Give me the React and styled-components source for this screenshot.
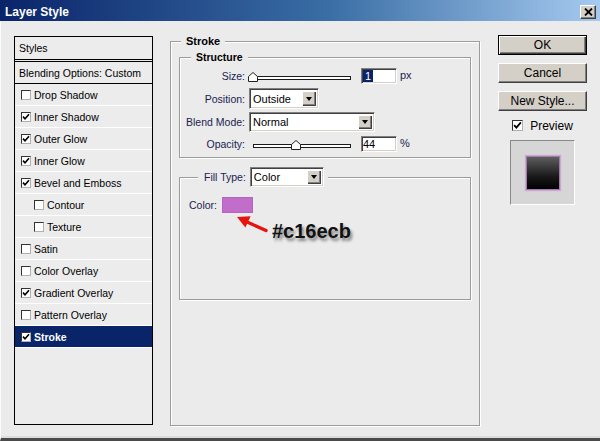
import React from "react";
import styled, { createGlobalStyle } from "styled-components";

const GlobalStyle = createGlobalStyle`
  html, body {
    margin: 0;
    padding: 0;
    background: #ebebeb;
  }
  body {
    font-family: "Liberation Sans", Arial, sans-serif;
  }
`;

const styleItems = [
  { label: "Drop Shadow", checked: false },
  { label: "Inner Shadow", checked: true },
  { label: "Outer Glow", checked: true },
  { label: "Inner Glow", checked: true },
  { label: "Bevel and Emboss", checked: true },
  { label: "Contour", checked: false, sub: true },
  { label: "Texture", checked: false, sub: true },
  { label: "Satin", checked: false },
  { label: "Color Overlay", checked: false },
  { label: "Gradient Overlay", checked: true },
  { label: "Pattern Overlay", checked: false },
  { label: "Stroke", checked: true, active: true },
];

const CheckBox = ({ checked, size = 10 }) => (
  <Box $size={size}>
    {checked ? (
      <svg width={size - 2} height={size - 2} viewBox="0 0 8 8">
        <path d="M1 3.6 L3 5.8 L7 1.2" fill="none" stroke="#000" strokeWidth="1.6" />
      </svg>
    ) : null}
  </Box>
);

const Slider = ({ value }) => (
  <SliderWrap>
    <Track />
    <Thumb style={{ left: `${(value / 100) * 98 - 5}px` }}>
      <svg width="10" height="10" viewBox="0 0 10 10">
        <path d="M0.5 4.5 L5 0.5 L9.5 4.5 L9.5 9.5 L0.5 9.5 Z" fill="#fff" stroke="#222" />
      </svg>
    </Thumb>
  </SliderWrap>
);

const Select = ({ value, width, height = 20 }) => (
  <SelectBox $width={width} $height={height}>
    <span>{value}</span>
    <DropBtn />
  </SelectBox>
);

const App = () => {
  return (
    <>
      <GlobalStyle />
      <Window>
        <TitleBar>
          <Title>Layer Style</Title>
          <CloseBtn>
            <svg width="9" height="8" viewBox="0 0 9 8">
              <path d="M1 0.5 L8 7.5 M8 0.5 L1 7.5" stroke="#000" strokeWidth="1.8" />
            </svg>
          </CloseBtn>
        </TitleBar>
        <Body>
          <StyleList>
            <ListHeader>Styles</ListHeader>
            <BlendRow>Blending Options: Custom</BlendRow>
            {styleItems.map((item) => (
              <StyleRow key={item.label} $sub={item.sub} $active={item.active}>
                <CheckBox checked={item.checked} />
                {item.label}
              </StyleRow>
            ))}
          </StyleList>

          <StrokeSet>
            <MainLegend>Stroke</MainLegend>
            <StructureSet>
              <SubLegend>Structure</SubLegend>
              <FieldRow $h={17}>
                <Label>Size:</Label>
                <Controls>
                  <Slider value={0} />
                  <NumInput>
                    <Selected>1</Selected>
                  </NumInput>
                  <Unit>px</Unit>
                </Controls>
              </FieldRow>
              <FieldRow $h={21} $top={1}>
                <Label>Position:</Label>
                <Select value="Outside" width={70} height={21} />
              </FieldRow>
              <FieldRow $h={20}>
                <Label>Blend Mode:</Label>
                <Select value="Normal" width={126} />
              </FieldRow>
              <FieldRow $h={17}>
                <Label>Opacity:</Label>
                <Controls>
                  <Slider value={44} />
                  <NumInput>44</NumInput>
                  <Unit>%</Unit>
                </Controls>
              </FieldRow>
            </StructureSet>

            <FillSet>
              <FillLegend>
                <LegendLabel>Fill Type:</LegendLabel>
                <Select value="Color" width={74} />
              </FillLegend>
              <FillBody>
                <ColorRow>
                  <Label as="span">Color:</Label>
                  <Swatch />
                </ColorRow>
                <Annotation>
                  <svg width="34" height="18" viewBox="0 0 34 18">
                    <path d="M31 15.5 L11 6.5" stroke="#e5140f" strokeWidth="3.4" strokeLinecap="round" />
                    <path d="M2 2 L15.6 1.2 L10.4 12.6 Z" fill="#e5140f" />
                  </svg>
                  <HexText>#c16ecb</HexText>
                </Annotation>
              </FillBody>
            </FillSet>
          </StrokeSet>

          <SideColumn>
            <Button $primary>OK</Button>
            <Button>Cancel</Button>
            <Button>New Style...</Button>
            <PreviewToggle>
              <CheckBox checked size={11} />
              Preview
            </PreviewToggle>
            <PreviewBox>
              <PreviewSquare />
            </PreviewBox>
          </SideColumn>
        </Body>
      </Window>
    </>
  );
};

const Window = styled.div`
  width: 600px;
  height: 441px;
  display: flex;
  flex-direction: column;
  background: #ebebeb;
  overflow: hidden;
`;

const TitleBar = styled.div`
  height: 21px;
  box-sizing: border-box;
  padding: 3px 4px 0 5px;
  display: flex;
  align-items: center;
  justify-content: space-between;
  background: linear-gradient(to right, #0a246a 0%, #3a6ea5 55%, #a6caf0 100%);
`;

const Title = styled.div`
  color: #fff;
  font-weight: bold;
  font-size: 12px;
`;

const CloseBtn = styled.div`
  width: 16px;
  height: 14px;
  box-sizing: border-box;
  display: flex;
  align-items: center;
  justify-content: center;
  background: #d4d0c8;
  border: 1px solid;
  border-color: #fff #404040 #404040 #fff;
  box-shadow: inset -1px -1px #808080;
`;

const Body = styled.div`
  flex: 1;
  display: flex;
  align-items: flex-start;
  padding: 14px 0 0 13px;
  border-left: 1px solid #fbfbfb;
  border-bottom: 3px solid #4a4a4a;
  box-shadow: inset 0 -2px #dcdcdc;
`;

const StyleList = styled.div`
  margin-top: 1px;
  width: 139px;
  height: 389px;
  box-sizing: border-box;
  border: 1px solid #000;
  background: #ececec;
  font-size: 10.5px;
  color: #000;
`;

const ListHeader = styled.div`
  height: 22px;
  display: flex;
  align-items: center;
  padding-left: 4px;
  border-bottom: 3px double #000;
`;

const BlendRow = styled.div`
  height: 21px;
  display: flex;
  align-items: center;
  padding-left: 4px;
  border-bottom: 1px solid #000;
`;

const StyleRow = styled.div`
  height: 21px;
  display: flex;
  align-items: center;
  gap: 3px;
  padding-left: ${(p) => (p.$sub ? "19px" : "6px")};
  border-bottom: 1px solid #fff;
  background: ${(p) => (p.$active ? "#0a246a" : "transparent")};
  color: ${(p) => (p.$active ? "#fff" : "#000")};
  font-weight: ${(p) => (p.$active ? "bold" : "normal")};
`;

const Box = styled.span`
  width: ${(p) => p.$size}px;
  height: ${(p) => p.$size}px;
  box-sizing: border-box;
  flex-shrink: 0;
  display: flex;
  align-items: center;
  justify-content: center;
  background: #fff;
  border: 1px solid;
  border-color: #333 #b0b0b0 #b0b0b0 #333;
`;

const StrokeSet = styled.fieldset`
  margin: 0 0 0 17px;
  padding: 4px 8px 0 8px;
  width: 310px;
  height: 391px;
  box-sizing: border-box;
  min-width: 0;
  border: 1px solid #9c9c9c;
  box-shadow: inset 1px 1px #fff, 1px 1px #fff;
`;

const MainLegend = styled.legend`
  margin-left: 2px;
  padding: 0 5px;
  font-size: 11px;
  line-height: 12px;
  font-weight: bold;
  color: #000;
  background: #ebebeb;
`;

const StructureSet = styled.fieldset`
  margin: 0;
  padding: 4px 0 5px 0;
  min-width: 0;
  display: flex;
  flex-direction: column;
  gap: 3px;
  border: 1px solid #9c9c9c;
  box-shadow: inset 1px 1px #fff, 1px 1px #fff;
`;

const SubLegend = styled.legend`
  margin-left: 11px;
  padding: 0 5px;
  font-size: 10.5px;
  line-height: 12px;
  font-weight: bold;
  color: #000;
  background: #ebebeb;
`;

const FieldRow = styled.div`
  display: grid;
  grid-template-columns: 65px auto;
  column-gap: 4px;
  align-items: center;
  height: ${(p) => p.$h}px;
  margin-top: ${(p) => p.$top || 0}px;
`;

const Label = styled.label`
  text-align: right;
  font-size: 10.5px;
  color: #1a2250;
  white-space: nowrap;
`;

const Controls = styled.div`
  display: flex;
  align-items: center;
`;

const SliderWrap = styled.div`
  position: relative;
  width: 98px;
  height: 17px;
  margin-left: 4px;
`;

const Track = styled.div`
  margin-top: 9px;
  height: 4px;
  box-sizing: border-box;
  border: 1px solid #1a1a1a;
  background: #fff;
`;

const Thumb = styled.div`
  position: absolute;
  top: 5px;
  width: 10px;
  height: 10px;
  line-height: 0;
`;

const NumInput = styled.div`
  margin-left: 10px;
  width: 36px;
  height: 16px;
  box-sizing: border-box;
  display: flex;
  align-items: center;
  padding-left: 1px;
  font-size: 11px;
  background: #fff;
  border: 1px solid;
  border-color: #808080 #fff #fff #808080;
  box-shadow: inset 1px 1px #404040, inset -1px -1px #d4d0c8;
`;

const Selected = styled.span`
  background: #0a246a;
  color: #fff;
  padding: 0 2px;
  line-height: 12px;
`;

const Unit = styled.span`
  margin-left: 3px;
  margin-top: -2px;
  font-size: 11px;
  color: #1a2250;
`;

const SelectBox = styled.div`
  width: ${(p) => p.$width}px;
  height: ${(p) => p.$height}px;
  box-sizing: border-box;
  display: flex;
  align-items: stretch;
  justify-content: space-between;
  padding: 2px;
  background: #fff;
  border: 1px solid;
  border-color: #808080 #fff #fff #808080;
  box-shadow: inset 1px 1px #404040, inset -1px -1px #d4d0c8;
  font-size: 11px;
  font-weight: normal;
  color: #000;

  span {
    display: flex;
    align-items: center;
    padding-left: 1px;
  }
`;

const DropBtn = styled.div`
  width: 14px;
  flex-shrink: 0;
  display: flex;
  align-items: center;
  justify-content: center;
  background: #d4d0c8;
  box-shadow: inset 1px 1px #fff, inset -1px -1px #404040, inset -2px -2px #808080;

  &::after {
    content: "";
    border-left: 3.5px solid transparent;
    border-right: 3.5px solid transparent;
    border-top: 4px solid #000;
  }
`;

const FillSet = styled.fieldset`
  margin: 9px 0 0 0;
  padding: 0 0 0 9px;
  min-width: 0;
  border: 1px solid #9c9c9c;
  box-shadow: inset 1px 1px #fff, 1px 1px #fff;
`;

const FillLegend = styled.legend`
  margin-left: 9px;
  padding: 0 4px 0 6px;
  display: flex;
  align-items: center;
  gap: 4px;
  background: #ebebeb;
`;

const LegendLabel = styled.span`
  font-size: 10.5px;
  color: #1a2250;
`;

const FillBody = styled.div`
  height: 112px;
  box-sizing: border-box;
  padding-top: 10px;
`;

const ColorRow = styled.div`
  display: flex;
  align-items: center;
  gap: 5px;
  height: 16px;
`;

const Swatch = styled.div`
  width: 31px;
  height: 16px;
  box-sizing: border-box;
  background: #c16ecb;
  border: 1px solid #b563c0;
`;

const Annotation = styled.div`
  display: flex;
  align-items: flex-start;
  margin: 2px 0 0 46px;
`;

const HexText = styled.div`
  margin: 6px 0 0 3px;
  font-size: 20px;
  line-height: 20px;
  font-weight: bold;
  color: #111;
  text-shadow: 2px 3px 3px rgba(0, 0, 0, 0.45);
`;

const SideColumn = styled.div`
  margin-left: 18px;
  width: 89px;
  display: flex;
  flex-direction: column;
  gap: 8px;
`;

const Button = styled.div`
  height: 20px;
  box-sizing: border-box;
  display: flex;
  align-items: center;
  justify-content: center;
  background: #d4d0c8;
  font-size: 12px;
  color: #000;
  border: 1px solid;
  border-color: ${(p) => (p.$primary ? "#000" : "#fff #404040 #404040 #fff")};
  box-shadow: ${(p) =>
    p.$primary
      ? "inset 1px 1px #fff, inset -1px -1px #404040, inset -2px -2px #808080"
      : "inset -1px -1px #808080"};
`;

const PreviewToggle = styled.div`
  margin-top: 1px;
  height: 11px;
  display: flex;
  align-items: center;
  justify-content: center;
  gap: 7px;
  font-size: 12px;
  color: #000;
`;

const PreviewBox = styled.div`
  margin: 1px auto 0;
  width: 65px;
  height: 65px;
  box-sizing: border-box;
  display: flex;
  align-items: center;
  justify-content: center;
  background: #d6d6d6;
  border: 1px solid;
  border-color: #8a8a8a #fff #fff #8a8a8a;
`;

const PreviewSquare = styled.div`
  width: 34px;
  height: 34px;
  box-sizing: border-box;
  background: linear-gradient(to bottom, #5e5e5e 0%, #1a1a1a 60%, #000 100%);
  border: 1px solid #a27ab0;
  box-shadow: 0 0 1px 1px rgba(193, 110, 203, 0.45);
`;

export default App;
